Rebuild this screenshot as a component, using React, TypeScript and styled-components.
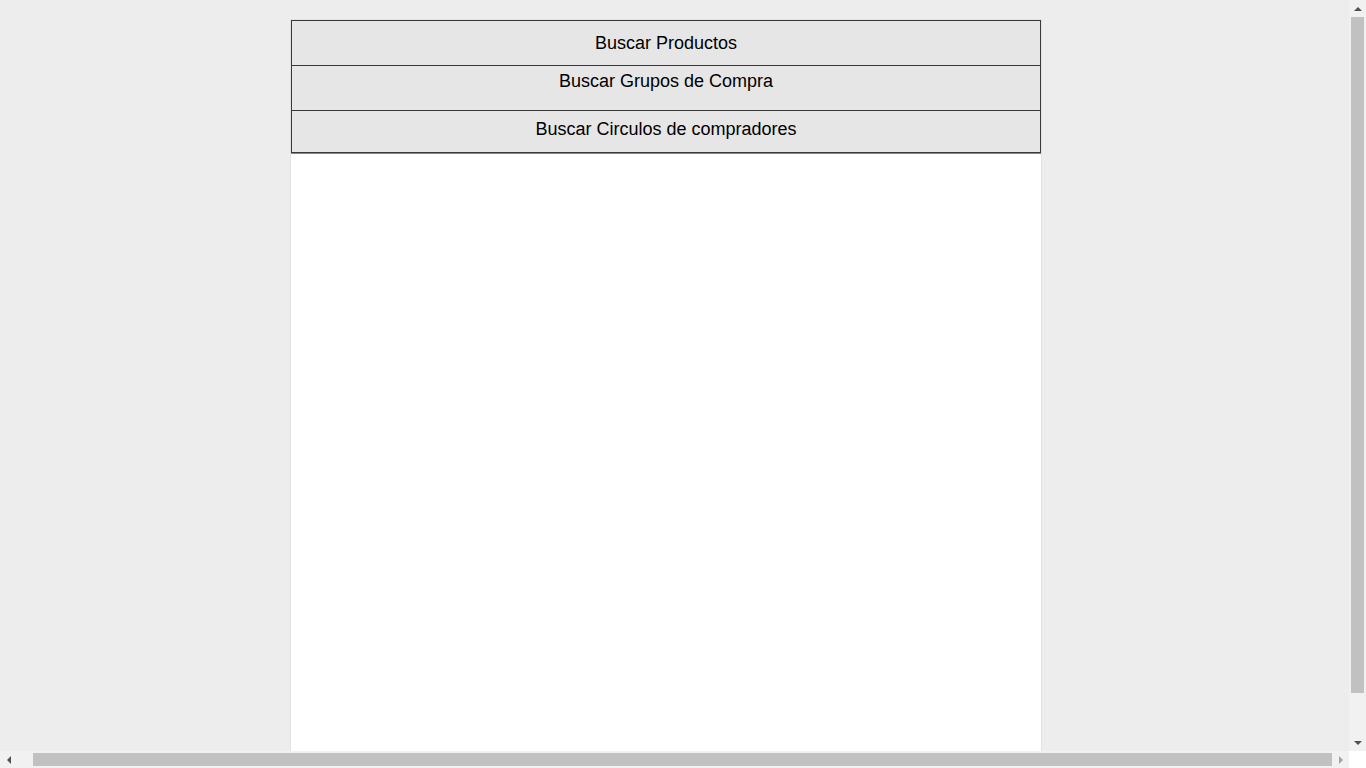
import * as React from 'react';
import styled, { createGlobalStyle } from 'styled-components';

const GlobalStyle = createGlobalStyle`
	html, body {
		margin: 0;
		padding: 0;
		background: #ededed;
	}
	* {
		box-sizing: border-box;
	}
`;

const SPage = styled.div`
	width: 100%;
	padding: 19px 34px 0 0;
	font-family: 'Liberation Sans', Arial, sans-serif;
`;

const SPanel = styled.div`
	width: 752px;
	height: 777px;
	margin: 0 auto;
	background: #ffffff;
	border: 1px solid #e2e2e2;
	display: flex;
	flex-direction: column;
`;

interface ITabProps {
	$padTop: number;
	$padBottom: number;
	$last?: boolean;
}

const STab = styled.button<ITabProps>`
	display: block;
	width: 100%;
	margin: 0;
	padding: ${(p) => p.$padTop}px 8px ${(p) => p.$padBottom}px;
	background: #e6e6e6;
	border: 1px solid #3a3a3a;
	border-top: none;
	font-family: 'Liberation Sans', Arial, sans-serif;
	font-size: 18px;
	line-height: 22px;
	color: #000;
	text-align: center;
	cursor: pointer;
	&:first-child {
		border-top: 1px solid #3a3a3a;
	}
	${(p) => (p.$last ? 'box-shadow: 0 1px 0 #8a8a8a;' : '')}
`;

/* browser scrollbars, drawn over the page */
const SVScroll = styled.div`
	position: fixed;
	top: 0;
	right: 0;
	width: 17px;
	height: 751px;
	background: #f1f1f1;
	display: flex;
	flex-direction: column;
	align-items: center;
`;

const SHScroll = styled.div`
	position: fixed;
	left: 0;
	bottom: 0;
	width: 1349px;
	height: 17px;
	background: #f1f1f1;
	display: flex;
	align-items: center;
`;

const SCorner = styled.div`
	position: fixed;
	right: 0;
	bottom: 0;
	width: 17px;
	height: 17px;
	background: #ffffff;
`;

const SArrow = styled.div`
	width: 17px;
	height: 17px;
	flex: none;
	display: flex;
	align-items: center;
	justify-content: center;
`;

const SVThumb = styled.div`
	width: 13px;
	height: 676px;
	background: #c1c1c1;
`;

const SHThumb = styled.div`
	height: 13px;
	width: 1299px;
	margin-left: 16px;
	background: #c1c1c1;
`;

const SHSpacer = styled.div`
	flex: 1;
`;

const Tri = ({ dir }: { dir: 'up' | 'down' | 'left' | 'right' }) => {
	const pts = {
		up: '0,4 4,0 8,4',
		down: '0,0 8,0 4,4',
		left: '4,0 4,8 0,4',
		right: '0,0 0,8 4,4',
	}[dir];
	const w = dir === 'up' || dir === 'down' ? 8 : 4;
	const h = dir === 'up' || dir === 'down' ? 4 : 8;
	return (
		<svg width={w} height={h} viewBox={`0 0 ${w} ${h}`}>
			<polygon points={pts} fill={dir === 'right' ? '#a3a3a3' : '#505050'} />
		</svg>
	);
};

const Scrollbars = () => (
	<>
		<SVScroll>
			<SArrow>
				<Tri dir='up' />
			</SArrow>
			<SVThumb />
			<SHSpacer />
			<SArrow>
				<Tri dir='down' />
			</SArrow>
		</SVScroll>
		<SHScroll>
			<SArrow>
				<Tri dir='left' />
			</SArrow>
			<SHThumb />
			<SHSpacer />
			<SArrow>
				<Tri dir='right' />
			</SArrow>
		</SHScroll>
		<SCorner />
	</>
);

const tabs = [
	{ label: 'Buscar Productos', top: 11, bottom: 11 },
	{ label: 'Buscar Grupos de Compra', top: 4, bottom: 18 },
	{ label: 'Buscar Circulos de compradores', top: 7, bottom: 12 },
];

const App = () => {
	return (
		<SPage>
			<GlobalStyle />
			<SPanel>
				{tabs.map((t, i) => (
					<STab
						key={t.label}
						$padTop={t.top}
						$padBottom={t.bottom}
						$last={i === tabs.length - 1}
					>
						{t.label}
					</STab>
				))}
			</SPanel>
			<Scrollbars />
		</SPage>
	);
};

export default App;
